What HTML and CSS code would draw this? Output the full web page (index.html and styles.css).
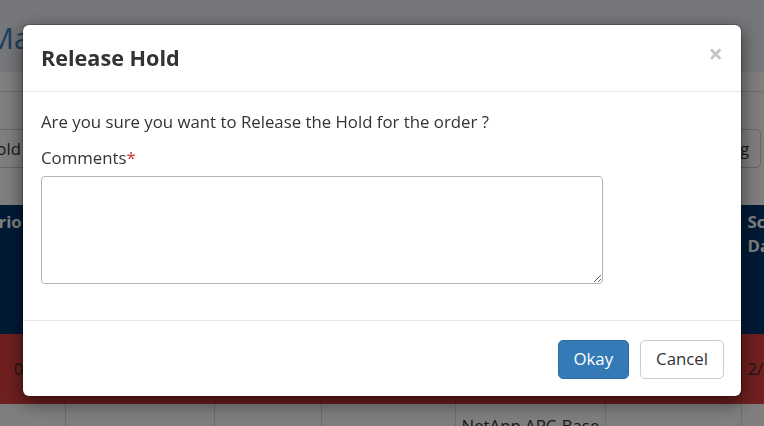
FILE: index.html
```html
<!DOCTYPE html>
<html lang="en">
<head>
<meta charset="utf-8">
<title>Release Hold</title>
<link rel="stylesheet" href="styles.css">
</head>
<body>
<div class="page">
  <div class="topbar"><h1 class="page-title">Manage Holds</h1></div>
  <div class="tabs"></div>
  <div class="toolbar">
    <button class="tb-btn tb-left">Hold</button>
    <button class="tb-btn tb-right">Catalog</button>
  </div>
  <table class="grid">
    <colgroup>
      <col class="w1"><col class="w2"><col class="w3"><col class="w4"><col class="w5"><col class="w6"><col class="w7">
    </colgroup>
    <thead>
      <tr>
        <th>Prio rity</th>
        <th>Order Number</th>
        <th>Customer</th>
        <th>Hold Reason</th>
        <th>Product</th>
        <th>Hold Date</th>
        <th>Scheduled Date</th>
      </tr>
    </thead>
    <tbody>
      <tr class="row-alert">
        <td class="center">07</td>
        <td>SO-104829</td>
        <td>Acme</td>
        <td>Credit</td>
        <td>Storage</td>
        <td>2/10/2024</td>
        <td>2/14/2024</td>
      </tr>
      <tr class="row-plain">
        <td></td>
        <td></td>
        <td></td>
        <td></td>
        <td>NetApp APC-Base</td>
        <td></td>
        <td></td>
      </tr>
    </tbody>
  </table>
</div>

<div class="backdrop"></div>

<div class="modal">
  <div class="modal-header">
    <h4 class="modal-title">Release Hold</h4>
    <button class="close" type="button">&times;</button>
  </div>
  <div class="modal-body">
    <p class="question">Are you sure you want to Release the Hold for the order ?</p>
    <label class="field-label">Comments<span class="req">*</span></label>
    <textarea class="comments"></textarea>
  </div>
  <div class="modal-footer">
    <button class="btn btn-primary" type="button">Okay</button>
    <button class="btn btn-default" type="button">Cancel</button>
  </div>
</div>
</body>
</html>
```
FILE: styles.css
```css
html, body {
  margin: 0;
  padding: 0;
  width: 764px;
  height: 426px;
  overflow: hidden;
  background: #ffffff;
  font-family: "Open Sans", "Liberation Sans", sans-serif;
  font-size: 16.8px;
  line-height: 24px;
  color: #333333;
}

.page {
  margin-left: -18px;
  width: 782px;
}

.topbar {
  height: 72px;
  background: #eceef4;
  box-sizing: border-box;
  padding: 20px 0 0 5px;
}

.page-title {
  margin: 0;
  font-size: 30px;
  line-height: 36px;
  font-weight: 400;
  color: #3c7ebe;
  white-space: nowrap;
}

.tabs {
  height: 19px;
  border-bottom: 1px solid #dddddd;
}

.toolbar {
  margin-top: 37px;
  display: flex;
  justify-content: space-between;
}

.tb-btn {
  height: 39px;
  box-sizing: border-box;
  padding: 0 11px 0 14px;
  border: 1px solid #cccccc;
  border-radius: 5px;
  background: #ffffff;
  font-family: "Open Sans", "Liberation Sans", sans-serif;
  font-size: 16.8px;
  color: #333333;
}

.tb-left {
  margin-left: -13px;
}

.tb-right {
  margin-right: 3px;
}

.grid {
  margin-top: 37px;
  border-collapse: collapse;
  table-layout: fixed;
  width: 859px;
}

.w1 { width: 83px; }
.w2 { width: 149px; }
.w3 { width: 107px; }
.w4 { width: 134px; }
.w5 { width: 150px; }
.w6 { width: 136px; }
.w7 { width: 100px; }

.grid th {
  height: 129px;
  box-sizing: border-box;
  background: #03356b;
  color: #ffffff;
  font-weight: 700;
  text-align: left;
  vertical-align: top;
  padding: 5px 6px;
  border-right: 1px solid #0a3d72;
}

.row-alert td {
  height: 70px;
  box-sizing: border-box;
  background: #e0403e;
  color: #333333;
  vertical-align: middle;
  padding: 0 6px;
  border-right: 1px solid #c23836;
  white-space: nowrap;
  overflow: hidden;
}

.row-alert td.center {
  text-align: center;
}

.row-plain td {
  height: 60px;
  box-sizing: border-box;
  background: #ffffff;
  color: #333333;
  vertical-align: top;
  padding: 10px 6px;
  border-right: 1px solid #dddddd;
  white-space: nowrap;
  overflow: hidden;
}

.backdrop {
  position: fixed;
  inset: 0;
  background: rgba(0, 0, 0, 0.5);
}

.modal {
  position: absolute;
  left: 22px;
  top: 24px;
  width: 720px;
  box-sizing: border-box;
  background: #ffffff;
  border: 1px solid rgba(0, 0, 0, 0.2);
  border-radius: 7px;
  box-shadow: 0 6px 18px rgba(0, 0, 0, 0.5);
  background-clip: padding-box;
}

.modal-header {
  display: flex;
  justify-content: space-between;
  align-items: flex-start;
  padding: 18px 18px 17px;
  border-bottom: 1px solid #e5e5e5;
}

.modal-title {
  margin: 0;
  font-size: 21.6px;
  line-height: 30.86px;
  font-weight: 700;
  color: #333333;
}

.close {
  margin-top: -2px;
  padding: 0;
  border: 0;
  background: transparent;
  font-family: "Open Sans", "Liberation Sans", sans-serif;
  font-size: 25.2px;
  line-height: 25.2px;
  font-weight: 700;
  color: #c4c4c4;
}

.modal-body {
  padding: 18px;
  display: flex;
  flex-direction: column;
  align-items: flex-start;
}

.question {
  margin: 0 0 12px;
}

.field-label {
  margin-bottom: 6px;
  font-weight: 400;
}

.req {
  color: #c9302c;
}

.comments {
  width: 562px;
  height: 108px;
  box-sizing: border-box;
  margin: 0 0 18px;
  border: 1px solid #b3b3b3;
  border-radius: 4px;
  font-family: "Open Sans", "Liberation Sans", sans-serif;
  font-size: 16.8px;
}

.modal-footer {
  display: flex;
  justify-content: flex-end;
  gap: 11px;
  padding: 19px 17px 17px 18px;
  border-top: 1px solid #e5e5e5;
}

.btn {
  height: 39px;
  box-sizing: border-box;
  padding: 0 15px;
  border: 1px solid transparent;
  border-radius: 5px;
  font-family: "Open Sans", "Liberation Sans", sans-serif;
  font-size: 16.8px;
  line-height: 24px;
}

.btn-primary {
  background: #337ab7;
  border-color: #2e6da4;
  color: #ffffff;
}

.btn-default {
  background: #ffffff;
  border-color: #cccccc;
  color: #333333;
}
```
